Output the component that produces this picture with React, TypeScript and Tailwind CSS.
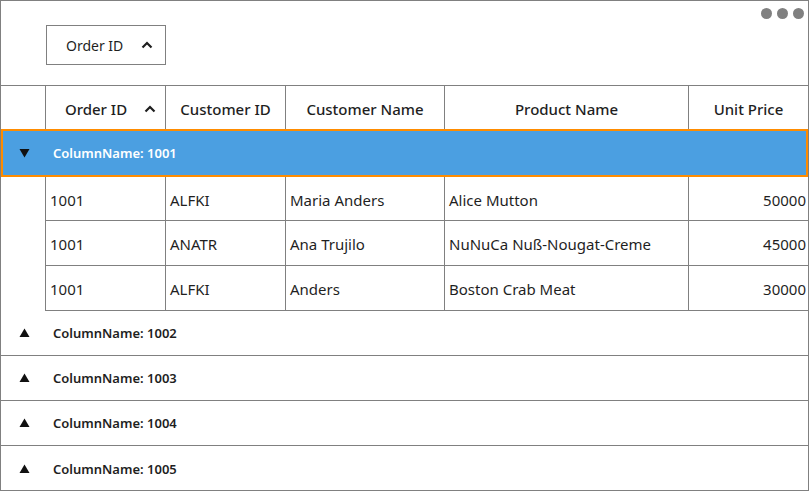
import React from 'react';

const cols = [
  { key: 'orderId', label: 'Order ID', w: 'w-[120px]' },
  { key: 'customerId', label: 'Customer ID', w: 'w-[120px]' },
  { key: 'customerName', label: 'Customer Name', w: 'w-[159px]' },
  { key: 'productName', label: 'Product Name', w: 'w-[244px]' },
  { key: 'unitPrice', label: 'Unit Price', w: 'flex-1' },
];

const rows = [
  { orderId: '1001', customerId: 'ALFKI', customerName: 'Maria Anders', productName: 'Alice Mutton', unitPrice: '50000' },
  { orderId: '1001', customerId: 'ANATR', customerName: 'Ana Trujilo', productName: 'NuNuCa Nuß-Nougat-Creme', unitPrice: '45000' },
  { orderId: '1001', customerId: 'ALFKI', customerName: 'Anders', productName: 'Boston Crab Meat', unitPrice: '30000' },
];

const collapsed = ['1002', '1003', '1004', '1005'];

const Chevron = () => (
  <svg width="12" height="8" viewBox="0 0 12 8" className="shrink-0">
    <polyline points="1.5,6.5 6,2 10.5,6.5" fill="none" stroke="#1f1f1f" strokeWidth="2.2" />
  </svg>
);

const Triangle = ({ down }: { down?: boolean }) => (
  <svg width="11" height="10" viewBox="0 0 11 10">
    {down ? <polygon points="0.5,1 10.5,1 5.5,9.5" fill="#111" /> : <polygon points="0.5,9 10.5,9 5.5,0.5" fill="#111" />}
  </svg>
);

export default function App() {
  return (
    <div
      className="w-[809px] h-[491px] border border-[#808080] bg-white flex flex-col overflow-hidden text-[#1f1f1f]"
      style={{ fontFamily: '"Noto Sans", "Open Sans", sans-serif' }}
    >
      {/* group drop area */}
      <div className="relative h-[85px] shrink-0 border-b border-[#808080] pl-[45px] pt-[24px]">
        <div className="w-[120px] h-[40px] border border-[#808080] flex items-center pl-[19px] pr-[10px] gap-[18px]">
          <span className="text-[14px]">Order ID</span>
          <Chevron />
        </div>
        <div className="absolute top-[7px] right-[4px] flex gap-[5px]">
          <span className="w-[11px] h-[11px] rounded-full bg-[#808080]" />
          <span className="w-[11px] h-[11px] rounded-full bg-[#808080]" />
          <span className="w-[11px] h-[11px] rounded-full bg-[#808080]" />
        </div>
      </div>

      {/* header */}
      <div className="flex h-[43px] shrink-0">
        <div className="w-[45px] border-r border-[#808080]" />
        {cols.map((c, i) => (
          <div
            key={c.key}
            className={`${c.w} ${i < cols.length - 1 ? 'border-r border-[#808080]' : ''} ${i === 0 ? 'pl-[10px]' : ''} flex items-center justify-center pt-[3px] text-[15px] font-medium gap-[17px]`}
          >
            <span>{c.label}</span>
            {i === 0 && <Chevron />}
          </div>
        ))}
      </div>

      {/* expanded group */}
      <div className="h-[48px] shrink-0 border-2 border-[#ff8c00] bg-[#4b9fe1] flex items-center">
        <div className="w-[42px] flex justify-center">
          <Triangle down />
        </div>
        <span className="text-[13px] font-semibold text-white ml-[8px] pt-[2px]">ColumnName: 1001</span>
      </div>

      <div className="flex shrink-0">
        <div className="w-[45px] border-r border-[#808080]" />
        <div className="flex-1 flex flex-col">
          {rows.map((r, ri) => (
            <div key={ri} className={`flex ${ri === 0 ? 'h-[44px]' : 'h-[45px]'} border-b border-[#808080]`}>
              {cols.map((c, i) => (
                <div
                  key={c.key}
                  className={`${c.w} ${i < cols.length - 1 ? 'border-r border-[#808080]' : ''} flex items-center pt-[3px] text-[15px] ${c.key === 'unitPrice' ? 'justify-end pr-[2px]' : 'pl-[4px]'}`}
                >
                  {r[c.key as keyof typeof r]}
                </div>
              ))}
            </div>
          ))}
        </div>
      </div>

      {/* collapsed groups */}
      {collapsed.map((g, i) => (
        <div
          key={g}
          className={`h-[45px] shrink-0 flex items-center ${i < collapsed.length - 1 ? 'border-b border-[#808080]' : ''}`}
        >
          <div className="w-[45px] flex justify-center pl-[1px]">
            <Triangle />
          </div>
          <span className="text-[13px] font-semibold ml-[7px] pt-[2px]">ColumnName: {g}</span>
        </div>
      ))}
    </div>
  );
}
